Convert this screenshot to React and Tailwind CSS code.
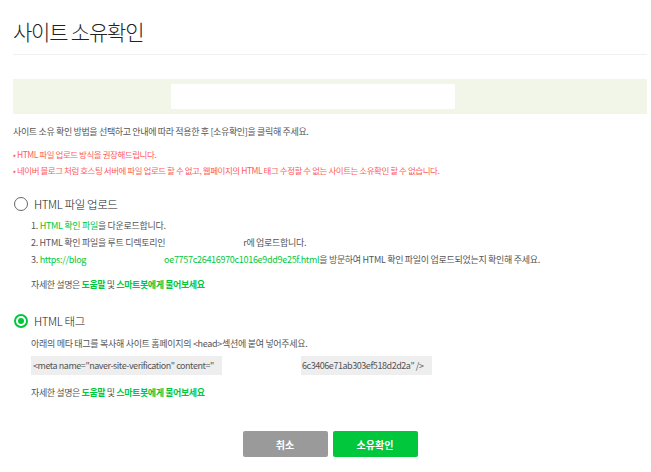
const green = "text-[#00c73c]";

const Radio = ({ checked }) =>
  checked ? (
    <span className="flex h-[14px] w-[14px] items-center justify-center rounded-full border-2 border-[#00c73c]">
      <span className="h-[6px] w-[6px] rounded-full bg-[#00c73c]" />
    </span>
  ) : (
    <span className="h-[14px] w-[14px] rounded-full border border-[#666]" />
  );

const Help = () => (
  <p className="text-[9px] leading-[14px] tracking-[-0.4px] text-[#555]">
    자세한 설명은 <span className={`font-bold ${green}`}>도움말</span> 및{" "}
    <span className={`font-bold ${green}`}>스마트봇에게 물어보세요</span>
  </p>
);

const App = () => {
  return (
    <main className="min-h-[472px] bg-white pl-[13px] pr-[4px] font-['Noto_Sans_CJK_KR','Noto_Sans',sans-serif] text-[#555]">
      <h1 className="pt-[16px] pb-[8px] text-[21px] font-light leading-[30px] tracking-[-1.2px] text-[#222]">
        사이트 소유확인
      </h1>
      <div className="h-px bg-[#f0f0f0]" />

      <div className="mt-[24px] flex h-[35px] items-center bg-[#f1f6e9] pl-[158px]">
        <div className="h-[25px] w-[284px] bg-white" />
      </div>

      <p className="mt-[11px] text-[9px] leading-[14px] tracking-[-0.35px]">
        사이트 소유 확인 방법을 선택하고 안내에 따라 적용한 후 [소유확인]을 클릭해 주세요.
      </p>
      <ul className="mt-[8px] space-y-[2px] text-[8.5px] leading-[14px] tracking-[-0.45px] text-[#ff5a5a]">
        <li>• HTML 파일 업로드 방식을 권장해드립니다.</li>
        <li>
          • 네이버 블로그 처럼 호스팅 서버에 파일 업로드 할 수 없고, 웹페이지의 HTML 태그 수정할 수 없는 사이트는 소유확인 할 수 없습니다.
        </li>
      </ul>

      <section className="mt-[18px]">
        <div className="flex items-center gap-[6px] pl-px">
          <Radio />
          <span className="text-[11.5px] font-light leading-[18px] tracking-[-0.4px] text-[#222]">
            HTML 파일 업로드
          </span>
        </div>
        <ol className="mt-[6px] space-y-[3px] pl-[18px] text-[9px] leading-[14px] tracking-[-0.3px]">
          <li>
            1. <span className={green}>HTML 확인 파일</span>을 다운로드합니다.
          </li>
          <li>
            2. HTML 확인 파일을 루트 디렉토리인
            <span className="inline-block w-[78px]" />r에 업로드합니다.
          </li>
          <li>
            3. <span className={green}>https://blog</span>
            <span className="inline-block w-[78px]" />
            <span className={green}>oe7757c26416970c1016e9dd9e25f.html</span>을 방문하여 HTML 확인 파일이 업로드되었는지 확인해 주세요.
          </li>
        </ol>
        <div className="mt-[11px] pl-[18px]">
          <Help />
        </div>
      </section>

      <section className="mt-[20px]">
        <div className="flex items-center gap-[6px] pl-px">
          <Radio checked />
          <span className="text-[11.5px] font-light leading-[18px] tracking-[-0.4px] text-[#222]">
            HTML 태그
          </span>
        </div>
        <div className="mt-[7px] pl-[18px]">
          <p className="text-[9px] leading-[14px] tracking-[-0.3px]">
            아래의 메타 태그를 복사해 사이트 홈페이지의 &lt;head&gt;섹션에 붙여 넣어주세요.
          </p>
          <div className="mt-[5px] flex h-[19px] items-center whitespace-nowrap text-[9px] tracking-[-0.45px] text-[#555]">
            <span className="flex h-full w-[191px] items-center overflow-hidden bg-[#eee] pl-[2px]">
              &lt;meta name="naver-site-verification" content="
            </span>
            <span className="w-[79px]" />
            <span className="flex h-full w-[131px] items-center overflow-hidden bg-[#eee] pl-px">
              6c3406e71ab303ef518d2d2a" /&gt;
            </span>
          </div>
          <div className="mt-[11px]">
            <Help />
          </div>
        </div>
      </section>

      <div className="mt-[31px] flex justify-center gap-[5px]">
        <button className="h-[26px] w-[85px] rounded-[2px] bg-[#9a9a9a] text-[10px] font-bold text-white">
          취소
        </button>
        <button className="h-[26px] w-[85px] rounded-[2px] bg-[#00c73c] text-[10px] font-bold text-white">
          소유확인
        </button>
      </div>
    </main>
  );
};

export default App;
